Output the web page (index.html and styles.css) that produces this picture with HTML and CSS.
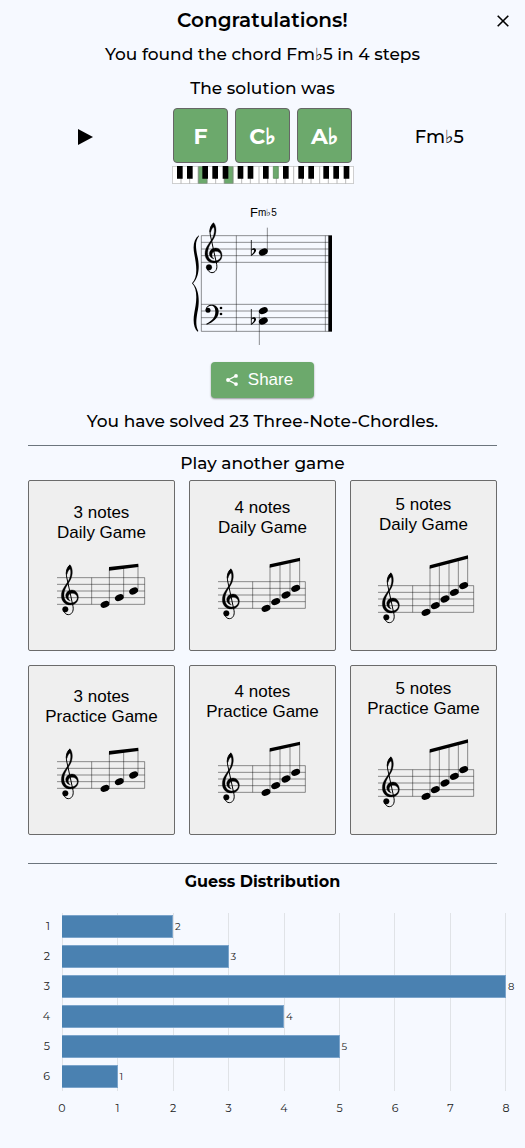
FILE: index.html
```html
<!DOCTYPE html>
<html lang="en">
<head>
<meta charset="utf-8">
<meta name="viewport" content="width=device-width, initial-scale=1">
<title>Chordle</title>
<link rel="stylesheet" href="styles.css">
</head>
<body>
<svg class="defs" aria-hidden="true">
  <defs>
    <g id="clef" stroke="#000" stroke-width="1">
      <path d="M101 84C92 92 88 104 91 120L110 208C113 224 105 233 96 233C90 233 85 229 82 222" fill="none" stroke-width="3"/>
      <path d="M101 83C108 90 110 106 106 119C101 137 84 149 83 172C82 187 91 198 103 198C115 198 123 191 123 181L126 181C126 195 116 204 102 204C86 204 75 192 75 176C75 155 92 142 99 126C103 116 105 102 101 96C97 98 94 104 92 112L89 110C90 98 94 88 101 83Z"/>
      <path d="M126 181C126 169 118 159 107 159C95 159 88 168 88 176C88 184 94 190 102 192C97 187 95 183 96 178C97 173 101 169 107 169C116 169 122 174 123 182Z"/>
      <circle cx="87" cy="217" r="8.5"/>
    </g>
    <ellipse id="note" rx="14" ry="9.500" transform="rotate(-24)"/>
    <g id="flat">
      <path d="M1 0V47" stroke="#000" stroke-width="2.4" fill="none"/>
      <path d="M1 29C7 22 16 24 15 32C14 38 7 43 1 48V44C6 40 10 35 9 31C8 28 4 28 1 33Z"/>
    </g>
    <g id="score3">
      <path class="line" d="M30 104H293M30 124H293M30 144H293M30 164H293M30 184H293M134 104V184M293 104V184"/>
      <use href="#clef" x="-32" y="-18"/>
      <path class="line" d="M187 180V76M230 160V72M273 140V67"/>
      <path d="M186 72L274 62V72L186 83Z"/>
      <g transform="translate(174 184)"><use href="#note"/></g>
      <g transform="translate(217 164)"><use href="#note"/></g>
      <g transform="translate(260 144)"><use href="#note"/></g>
    </g>
    <g id="score4">
      <path class="line" d="M30 131H292M30 151H292M30 171H292M30 191H292M30 211H292M134 131V211M292 131V211"/>
      <use href="#clef" x="-32" y="9"/>
      <path class="line" d="M186 207V83M216 187V77M246 167V71M275 147V64"/>
      <path d="M185 79L276 59V69L185 89Z"/>
      <g transform="translate(174 211)"><use href="#note"/></g>
      <g transform="translate(203 191)"><use href="#note"/></g>
      <g transform="translate(234 171)"><use href="#note"/></g>
      <g transform="translate(263 151)"><use href="#note"/></g>
    </g>
    <g id="score5">
      <path class="line" d="M27 152H314M27 172H314M27 192H314M27 212H314M27 232H314M131 152V232M314 152V232"/>
      <use href="#clef" x="-35" y="30"/>
      <path class="line" d="M183 228V95M211 208V89M240 188V81M268 168V74M296 148V66"/>
      <path d="M182 91L297 61V71L182 101Z"/>
      <g transform="translate(171 232)"><use href="#note"/></g>
      <g transform="translate(199 212)"><use href="#note"/></g>
      <g transform="translate(228 192)"><use href="#note"/></g>
      <g transform="translate(256 172)"><use href="#note"/></g>
      <g transform="translate(284 152)"><use href="#note"/></g>
    </g>
  </defs>
</svg>

<main class="results">
  <header class="head">
    <h1 class="title">Congratulations!</h1>
    <button class="close" type="button" aria-label="Close">
      <svg viewBox="0 0 12 12" width="12" height="12"><path d="M.7.7 11.3 11.3M11.3.7.7 11.3" fill="none" stroke="#000" stroke-width="1.6"/></svg>
    </button>
  </header>
  <p class="line-text">You found the chord Fm<span class="flat">♭</span>5 in 4 steps</p>
  <p class="line-text">The solution was</p>

  <section class="solution">
    <button class="play" type="button" aria-label="Play chord">
      <svg viewBox="0 0 15 18" width="15" height="18"><path d="M0 1 15 9 0 17Z"/></svg>
    </button>
    <div class="keys">
      <div class="tiles">
        <span class="tile">F</span>
        <span class="tile">C<span class="flat">♭</span></span>
        <span class="tile">A<span class="flat">♭</span></span>
      </div>
      <svg class="piano" viewBox="0 0 546 54" width="182" height="18" role="img" aria-label="Keyboard">
        <path d="M1 1H545V53H1Z" fill="#fff"/>
        <path d="M79 1H105V53H79ZM157 1H183V53H157Z" fill="#6ca96c" stroke="#4c824c" stroke-width="2"/>
        <path d="M27 1V53M53 1V53M79 1V53M105 1V53M131 1V53M157 1V53M183 1V53M209 1V53M235 1V53M261 1V53M287 1V53M313 1V53M339 1V53M365 1V53M391 1V53M417 1V53M443 1V53M469 1V53M495 1V53M521 1V53" stroke="#999" stroke-width="2"/>
        <path d="M1 1H545V53H1Z" fill="none" stroke="#aaa" stroke-width="2"/>
        <path d="M15 0h17v38h-17zM45 0h17v38h-17zM91 0h17v38h-17zM121 0h17v38h-17zM152 0h17v38h-17zM197 0h17v38h-17zM227 0h17v38h-17zM273 0h17v38h-17zM333 0h17v38h-17zM379 0h17v38h-17zM409 0h17v38h-17zM454 0h17v38h-17zM484 0h17v38h-17zM515 0h17v38h-17z"/>
        <path d="M304 1h15v36h-15z" fill="#6ca96c" stroke="#4c824c" stroke-width="2"/>
      </svg>
    </div>
    <span class="chord">Fm<span class="flat">♭</span>5</span>
  </section>

  <svg class="score" viewBox="33 30 429 426" width="143" height="142" role="img" aria-label="Chord in staff notation">
    <text class="score-name" x="210" y="67">F<tspan class="score-ext" dy="-5">m♭5</tspan></text>
    <path class="line" d="M64 122H446M64 142H446M64 162H446M64 182H446M64 202H446M64 328H446M64 348H446M64 368H446M64 388H446M64 409H446M64 122V409M169 122V409M436 122V409"/>
    <path d="M445 121H456V410H445Z"/>
    <path d="M57 121C41 133 38 152 43 178C49 210 55 245 36 265C55 285 49 322 43 353C38 381 42 400 53 410L55 408C47 394 48 378 52 353C60 318 57 284 39 265C57 246 60 214 52 182C46 153 46 138 57 123Z"/>
    <use href="#clef"/>
    <circle cx="84" cy="346" r="7.5"/>
    <path d="M77 345C77 335 86 329 95 329C107 329 116 337 116 350C116 369 98 382 80 389L79 386C95 378 106 368 106 350C106 339 102 332 94 332C87 332 81 336 80 342Z"/>
    <circle cx="123" cy="339" r="4"/><circle cx="123" cy="357" r="4"/>
    <use href="#flat" x="213" y="135"/>
    <use href="#flat" x="213" y="342"/>
    <path class="line" d="M262 168V98M238 348V450"/>
    <g transform="translate(250 171)"><use href="#note"/></g>
    <g transform="translate(250 347)"><use href="#note"/></g>
    <g transform="translate(250 378)"><use href="#note"/></g>
  </svg>

  <button class="share" type="button">
    <svg viewBox="0 0 12 12" width="12" height="12"><path d="M10 1.900 2 6l8 4.100" fill="none" stroke="#fff" stroke-width="1.2"/><g fill="#fff"><circle cx="10" cy="1.900" r="1.900"/><circle cx="2" cy="6" r="1.900"/><circle cx="10" cy="10.100" r="1.900"/></g></svg>
    Share
  </button>
  <p class="line-text solved">You have solved 23 Three-Note-Chordles.</p>

  <section class="another">
    <h2 class="line-text">Play another game</h2>
    <div class="games">
      <button class="game" type="button">3 notes<br>Daily Game<svg viewBox="0 0 330 261" width="110" height="87"><use href="#score3"/></svg></button>
      <button class="game" type="button">4 notes<br>Daily Game<svg viewBox="0 0 330 291" width="110" height="97"><use href="#score4"/></svg></button>
      <button class="game" type="button">5 notes<br>Daily Game<svg viewBox="0 0 330 309" width="110" height="103"><use href="#score5"/></svg></button>
      <button class="game" type="button">3 notes<br>Practice Game<svg viewBox="0 0 330 261" width="110" height="87"><use href="#score3"/></svg></button>
      <button class="game" type="button">4 notes<br>Practice Game<svg viewBox="0 0 330 291" width="110" height="97"><use href="#score4"/></svg></button>
      <button class="game" type="button">5 notes<br>Practice Game<svg viewBox="0 0 330 309" width="110" height="103"><use href="#score5"/></svg></button>
    </div>
  </section>

  <section class="stats">
    <h2 class="stats-title">Guess Distribution</h2>
  </section>
  <div class="chart">
    <div class="plot">
      <div class="gridlines"><i></i><i></i><i></i><i></i><i></i><i></i><i></i><i></i><i></i></div>
      <div class="row"><span class="row-label">1</span><span class="bar" style="width:25%"></span><span class="value">2</span></div>
      <div class="row"><span class="row-label">2</span><span class="bar" style="width:37.5%"></span><span class="value">3</span></div>
      <div class="row"><span class="row-label">3</span><span class="bar" style="width:100%"></span><span class="value">8</span></div>
      <div class="row"><span class="row-label">4</span><span class="bar" style="width:50%"></span><span class="value">4</span></div>
      <div class="row"><span class="row-label">5</span><span class="bar" style="width:62.5%"></span><span class="value">5</span></div>
      <div class="row"><span class="row-label">6</span><span class="bar" style="width:12.5%"></span><span class="value">1</span></div>
    </div>
    <div class="axis"><span>0</span><span>1</span><span>2</span><span>3</span><span>4</span><span>5</span><span>6</span><span>7</span><span>8</span></div>
  </div>
</main>
</body>
</html>
```
FILE: styles.css
```css
* { box-sizing: border-box; }

body {
  margin: 0;
  background: #f6f9ff;
  color: #000;
  font-family: Montserrat, Inter, "DejaVu Sans", sans-serif;
  font-size: 17px;
  font-weight: 500;
}

button { font: inherit; color: inherit; cursor: pointer; }
h1, h2, p { margin: 0; }
.defs { position: absolute; width: 0; height: 0; }
.line { fill: none; stroke: #000; stroke-opacity: .65; stroke-width: 2; }
.flat { font-family: "DejaVu Sans", sans-serif; font-weight: 400; }

.results {
  display: flex;
  flex-direction: column;
  padding: 4px 0 31px;
}

.head {
  display: grid;
  grid-template-columns: 44px 1fr 44px;
  align-items: center;
}
.title {
  grid-column: 2;
  text-align: center;
  font-size: 20px;
  line-height: 33px;
  font-weight: 600;
}
.close {
  display: grid;
  place-items: center;
  width: 44px;
  height: 33px;
  padding: 0;
  border: 0;
  background: none;
}
.line-text {
  text-align: center;
  font-size: 17px;
  font-weight: 500;
  line-height: 34px;
}

.solution {
  display: grid;
  grid-template-columns: 1fr auto 1fr;
  justify-items: center;
  margin-top: 3px;
}
.play { height: 57px; padding: 0; border: 0; background: none; }
.play svg { display: block; }
.chord { font-size: 18px; line-height: 57px; }
.keys {
  display: flex;
  flex-direction: column;
  align-items: center;
  gap: 3px;
}
.tiles { display: flex; gap: 7px; }
.tile {
  width: 55px;
  height: 55px;
  border: 1px solid #666;
  border-radius: 4px;
  background: #6ca96c;
  color: #fff;
  font-size: 22px;
  font-weight: 700;
  line-height: 55px;
  text-align: center;
}
.tile .flat { -webkit-text-stroke: 1px #fff; }
.piano { display: block; }

.score { align-self: center; margin-top: 21px; }
.score-name { font-family: "Liberation Sans", Arial, sans-serif; font-size: 39px; font-weight: 400; }
.score-ext { font-size: 30px; }

.share {
  display: flex;
  align-items: center;
  align-self: center;
  gap: 10px;
  height: 36px;
  margin-top: 15px;
  padding: 0 21px 0 15px;
  border: 0;
  border-radius: 4px;
  background: #6ca96c;
  box-shadow: 0 1px 2px rgba(0, 0, 0, .4);
  color: #fff;
  font-family: "Liberation Sans", Arial, sans-serif;
  font-size: 17px;
  font-weight: 400;
}
.solved { margin: 6px 0 7px; }

.another {
  margin: 0 28px;
  padding-bottom: 28px;
  border-top: 1px solid #6c757d;
}
.games {
  display: grid;
  grid-template-columns: repeat(3, 1fr);
  grid-template-rows: 171px 170px;
  gap: 14px;
}
.game {
  padding: 1px 0 0;
  border: 1px solid #6b6b6b;
  border-radius: 2px;
  background: #efefef;
  font-family: "Liberation Sans", Arial, sans-serif;
  font-size: 17px;
  font-weight: 400;
  line-height: 20px;
}
.game svg { display: block; margin: 0 auto; }

.stats {
  margin: 0 28px;
  border-top: 1px solid #6c757d;
}
.stats-title {
  text-align: center;
  font-size: 16px;
  font-weight: 700;
  line-height: 36px;
}

.chart {
  margin: 13px 19px 0 62px;
  color: #222;
  font-size: 11px;
  font-weight: 400;
}
.plot {
  position: relative;
  display: flex;
  flex-direction: column;
  gap: 7px;
  padding: 2px 0 3px;
}
.gridlines {
  position: absolute;
  inset: 0;
  display: flex;
  justify-content: space-between;
}
.gridlines i { width: 1px; background: #e0e3e7; }
.row {
  position: relative;
  display: flex;
  height: 23px;
  margin-left: -24px;
  line-height: 23px;
  padding-left: 24px;
}
.row-label {
  flex: none;
  width: 24px;
  margin-left: -24px;
  padding-right: 12px;
  text-align: right;
}
.bar {
  flex: none;
  border: 1px solid #7ba4cb;
  border-left: 0;
  background: #4a81b1;
}
.value {
  flex: none;
  width: 0;
  padding-left: 2px;
  font-size: 10px;
}
.axis {
  display: flex;
  justify-content: space-between;
  margin-top: 8px;
  line-height: 18px;
}
.axis span {
  display: flex;
  justify-content: center;
  width: 0;
}
```
